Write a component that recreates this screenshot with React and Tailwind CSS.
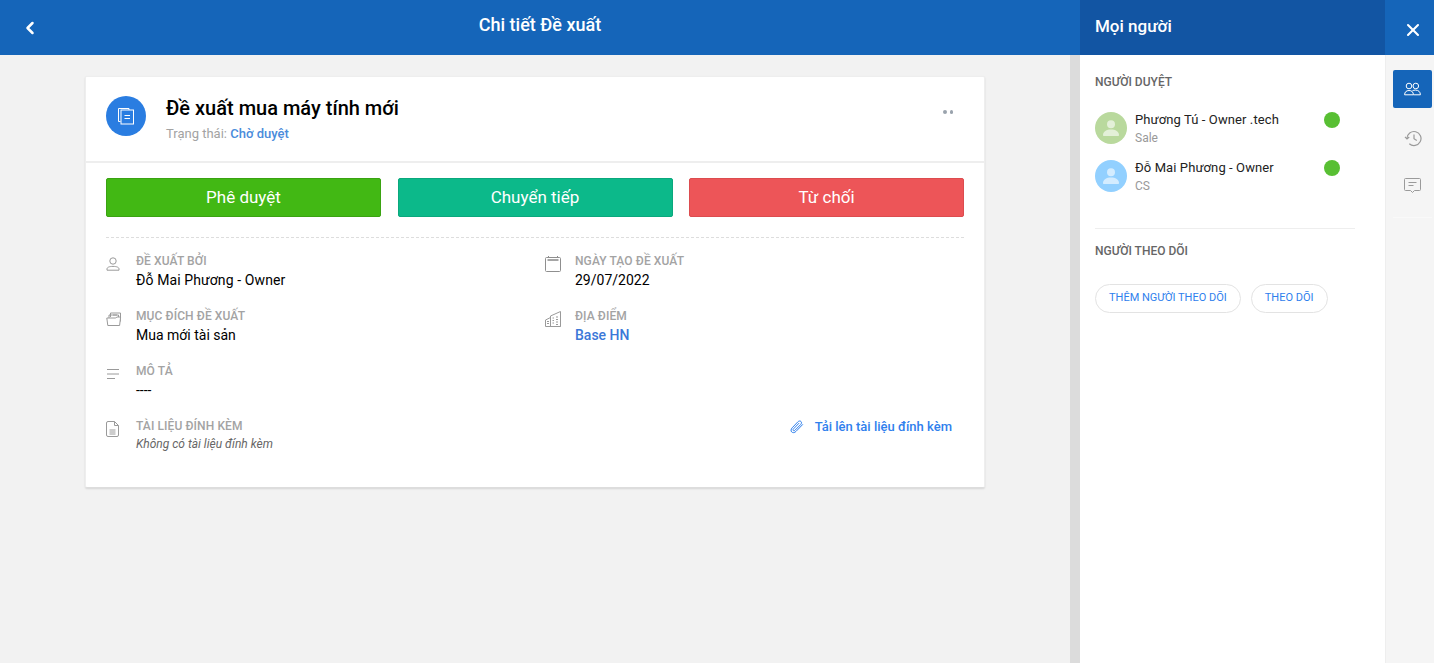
import React from 'react';
import { ChevronLeft, X } from 'lucide-react';

const IconUser = () => (
  <svg width="14" height="14" viewBox="0 0 14 14" fill="none" stroke="#9a9a9a" strokeWidth="1">
    <circle cx="7" cy="4" r="3.200" />
    <path d="M1 13.200v-1.200c0-1.600 2-2.600 6-2.600s6 1 6 2.600v1.200z" />
  </svg>
);

const IconFolder = () => (
  <svg width="16" height="14" viewBox="0 0 16 14" fill="none" stroke="#9a9a9a" strokeWidth="1">
    <path d="M4.500 5V1h10v8.500" />
    <path d="M3 6V3h9.500v2" />
    <path d="M.8 6h9l1-1h3.800l-1 8.500H1.800z" fill="#fff" />
    <path d="M7 3h4" />
  </svg>
);

const IconLines = () => (
  <svg width="14" height="10" viewBox="0 0 14 10" fill="none" stroke="#9a9a9a" strokeWidth="1">
    <path d="M1 .5h12M1 5h12M1 9.500h8" />
  </svg>
);

const IconFile = () => (
  <svg width="13" height="16" viewBox="0 0 13 16" fill="none" stroke="#9a9a9a" strokeWidth="1">
    <path d="M2 .5h6.500l4 4V14a1.500 1.500 0 0 1-1.500 1.500H2A1.500 1.500 0 0 1 .5 14V2A1.500 1.500 0 0 1 2 .5z" />
    <path d="M8.500.5v4h4" />
    <path d="M3.500 9h6M3.500 11h6M3.500 13h6" />
  </svg>
);

const IconCalendar = () => (
  <svg width="16" height="16" viewBox="0 0 16 16" fill="none" stroke="#8f8f8f" strokeWidth="1">
    <rect x=".5" y="1.500" width="15" height="14" rx="1" />
    <path d="M2.500 4h11" strokeWidth="1.600" />
    <path d="M3.500 0v1.500M12.500 0v1.500" />
  </svg>
);

const IconBuilding = () => (
  <svg width="16" height="16" viewBox="0 0 16 16" fill="none" stroke="#9a9a9a" strokeWidth="1">
    <path d="M.5 15.500V9l5-2.500v9M5.500 15.500V5l10-4.500v15z" />
    <path d="M.5 15.500h15" />
    <path d="M2 10.500h2M2 12.500h2M7.500 7h1.500M11 6h2M7.500 9.500h1.500M11 8.500h2M7.500 12h1.500M11 11h2M11 13.500h2" />
  </svg>
);

const IconClip = () => (
  <svg width="14" height="14" viewBox="0 0 14 14" fill="none" stroke="#2f80ed" strokeWidth="1" strokeLinecap="round">
    <path d="M12.600 4.600 6 11.400c-1.400 1.500-3.300 1.600-4.300.6-1-1-.9-2.800.5-4.200l5.600-5.900c1-1 2.400-1.200 3.200-.4.8.8.6 2.100-.4 3.100L5 10.200c-.6.6-1.300.7-1.700.3-.4-.4-.3-1.100.3-1.700l5.200-5.400" />
  </svg>
);

const IconDoc = () => (
  <svg width="18" height="20" viewBox="0 0 18 20" fill="none" stroke="#fff" strokeWidth="1">
    <path d="M3.500 15.500H1.500V2.500h10.500v1.500" />
    <rect x="4" y="4" width="12.500" height="14" fill="#2a7de1" />
    <path d="M7.500 9.500h5.500M7.500 12.500h5.500" />
  </svg>
);

const IconPeople = () => (
  <svg width="17" height="14" viewBox="0 0 17 14" fill="none" stroke="#fff" strokeWidth="1">
    <circle cx="5" cy="4" r="2.800" />
    <circle cx="11.800" cy="4" r="2.800" />
    <path d="M.6 12.800c0-2.600 1.600-4.300 4.400-4.300 2.800 0 4.400 1.700 4.400 4.300z" />
    <path d="M8.400 8.800c.9-.5 2-.7 3.100-.7 3 0 4.900 1.800 4.900 4.700h-6.800" />
  </svg>
);

const IconHistory = () => (
  <svg width="18" height="17" viewBox="0 0 18 17" fill="none" stroke="#9a9a9a" strokeWidth="1.200">
    <path d="M3 8.500a7 7 0 1 1 2.300 5.200" />
    <path d="M1 6.800 3 9l2.200-2" />
    <path d="M10 4.500v4.200l2.800 1.800" />
  </svg>
);

const IconComment = () => (
  <svg width="17" height="16" viewBox="0 0 17 16" fill="none" stroke="#9a9a9a" strokeWidth="1">
    <path d="M1.500.5h14a1 1 0 0 1 1 1v10a1 1 0 0 1-1 1h-5l-2 2-2-2h-5a1 1 0 0 1-1-1v-10a1 1 0 0 1 1-1z" />
    <path d="M4.500 4.500h8M4.500 7.500h5" />
  </svg>
);

const IconPerson = () => (
  <svg width="18" height="16" viewBox="0 0 18 16" fill="#ffffff" fillOpacity="0.6">
    <circle cx="9" cy="4.200" r="4" />
    <path d="M1 15c0-3.500 3.500-5.500 8-5.500s8 2 8 5.500c0 .6-.4 1-1 1H2c-.6 0-1-.4-1-1z" />
  </svg>
);

const Field = ({ icon, label, children }) => (
  <div className="flex h-[55px]">
    <div className="w-[30px] h-[17px] pt-[2px] flex items-center shrink-0">{icon}</div>
    <div>
      <div className="text-[12px] leading-[14px] font-medium tracking-[0.1px] text-[#a3a3a3]">{label}</div>
      {children}
    </div>
  </div>
);

const Approver = ({ name, role, color }) => (
  <div className="flex items-center h-[32px] mb-4">
    <div className={`w-8 h-8 rounded-full flex items-center justify-center shrink-0 ${color}`}>
      <IconPerson />
    </div>
    <div className="ml-2 w-[189px]">
      <div className="text-[13px] leading-[16px] mt-[1px] tracking-[0.1px] text-[#222]">{name}</div>
      <div className="text-[12px] leading-[14px] mt-[3px] text-[#999]">{role}</div>
    </div>
    <div className="w-4 h-4 rounded-full bg-[#58bf33] -mt-4"></div>
  </div>
);

export default function App() {
  return (
    <div className="h-[663px] flex flex-col overflow-hidden bg-[#f2f2f2] font-['Roboto',sans-serif]">
      <header className="h-[55px] flex shrink-0 bg-[#1565b9] text-white">
        <div className="w-[1080px] flex items-center relative">
          <ChevronLeft size={20} strokeWidth={3} className="ml-5" />
          <div className="absolute left-0 w-full text-center -mt-[7px] text-[18px] font-medium">Chi tiết Đề xuất</div>
        </div>
        <div className="w-[305px] bg-[#1255a3] pl-[15px] pt-[16px] text-[17px] leading-[20px] font-medium">Mọi người</div>
        <div className="w-[49px] flex items-center justify-center pt-[4px] pl-[6px]">
          <X size={20} strokeWidth={2.500} />
        </div>
      </header>

      <div className="flex flex-1">
        <main className="w-[1070px] pl-[85px] pt-[21px]">
          <div className="w-[900px] h-[412px] bg-white rounded-[2px] border border-[#eeeeee] border-b-[#dddddd] shadow-[0_1px_2px_rgba(0,0,0,0.12)]">
            <div className="h-[86px] border-b-2 border-[#eeeeee] pl-[20px] pt-[19px] flex relative">
              <div className="w-10 h-10 rounded-full bg-[#2a7de1] flex items-center justify-center">
                <IconDoc />
              </div>
              <div className="ml-5">
                <div className="text-[20px] leading-[24px] font-medium text-black">Đề xuất mua máy tính mới</div>
                <div className="text-[13px] leading-[15px] mt-[6px] text-[#a3a3a3]">
                  Trạng thái: <span className="font-medium text-[#4a8cdb]">Chờ duyệt</span>
                </div>
              </div>
              <div className="absolute left-[857px] top-[33px] flex gap-[3px]">
                <div className="w-[3.500px] h-[3.500px] rounded-full bg-[#9aa3ad]"></div>
                <div className="w-[3.500px] h-[3.500px] rounded-full bg-[#9aa3ad]"></div>
              </div>
            </div>

            <div className="px-[20px] pt-[15px]">
              <div className="flex justify-between">
                <button className="w-[275px] h-[39px] rounded-[2px] bg-[#42b814] border border-[#3aa312] text-white text-[17px]">Phê duyệt</button>
                <button className="w-[275px] h-[39px] rounded-[2px] bg-[#0cb98a] border border-[#0aa87d] text-white text-[17px]">Chuyển tiếp</button>
                <button className="w-[275px] h-[39px] rounded-[2px] bg-[#ed5558] border border-[#dc4c4f] text-white text-[17px]">Từ chối</button>
              </div>

              <div className="mt-[20px] border-t border-dashed border-[#dddddd]"></div>

              <div className="mt-[16px] flex">
                <div className="w-[439px]">
                  <Field icon={<IconUser />} label="ĐỀ XUẤT BỞI">
                    <div className="text-[14px] leading-[16px] mt-[4px] tracking-[0.1px] text-black">Đỗ Mai Phương - Owner</div>
                  </Field>
                  <Field icon={<IconFolder />} label="MỤC ĐÍCH ĐỀ XUẤT">
                    <div className="text-[14px] leading-[16px] mt-[4px] text-black">Mua mới tài sản</div>
                  </Field>
                  <Field icon={<IconLines />} label="MÔ TẢ">
                    <div className="text-[14px] leading-[16px] mt-[4px] text-black">----</div>
                  </Field>
                </div>
                <div>
                  <Field icon={<IconCalendar />} label="NGÀY TẠO ĐỀ XUẤT">
                    <div className="text-[14px] leading-[16px] mt-[4px] text-black">29/07/2022</div>
                  </Field>
                  <Field icon={<IconBuilding />} label="ĐỊA ĐIỂM">
                    <div className="text-[14px] leading-[16px] mt-[4px] font-medium text-[#3b78d8]">Base HN</div>
                  </Field>
                </div>
              </div>

              <div className="flex justify-between">
                <Field icon={<IconFile />} label="TÀI LIỆU ĐÍNH KÈM">
                  <div className="text-[12px] leading-[14px] mt-[4px] italic text-[#666]">Không có tài liệu đính kèm</div>
                </Field>
                <div className="flex items-center h-[16px] pr-3 gap-[11px]">
                  <IconClip />
                  <span className="text-[13px] font-medium text-[#2f80ed]">Tải lên tài liệu đính kèm</span>
                </div>
              </div>
            </div>
          </div>
        </main>

        <div className="w-[10px] bg-[#dcdcdc]"></div>

        <aside className="w-[305px] bg-white pl-[15px] pt-[20px]">
          <div className="text-[12px] leading-[14px] font-medium text-[#666]">NGƯỜI DUYỆT</div>
          <div className="mt-[23px]">
            <Approver name="Phương Tú - Owner .tech" role="Sale" color="bg-[#b9d99d]" />
            <Approver name="Đỗ Mai Phương - Owner" role="CS" color="bg-[#92d0ff]" />
          </div>
          <div className="mt-[36px] w-[260px] border-t border-[#eeeeee]"></div>
          <div className="mt-[15px] text-[12px] leading-[14px] font-medium text-[#666]">NGƯỜI THEO DÕI</div>
          <div className="mt-[26px] flex gap-[10px]">
            <button className="h-[29px] px-[13px] rounded-full border border-[#e3e3e3] text-[11px] text-[#2f80ed]">THÊM NGƯỜI THEO DÕI</button>
            <button className="h-[29px] px-[13px] rounded-full border border-[#e3e3e3] text-[11px] text-[#2f80ed]">THEO DÕI</button>
          </div>
        </aside>

        <nav className="w-[49px] bg-[#f5f5f5] border-l border-[#eeeeee] pt-[15px] pl-[7px]">
          <div className="w-[39px] h-[38px] rounded-[2px] bg-[#1565b9] flex items-center justify-center">
            <IconPeople />
          </div>
          <div className="w-[39px] h-[30px] mt-[15px] flex items-center justify-center">
            <IconHistory />
          </div>
          <div className="w-[39px] h-[30px] mt-[18px] flex items-center justify-center">
            <IconComment />
          </div>
          <div className="w-[39px] mt-[16px] border-t border-[#f9f9f9]"></div>
        </nav>
      </div>
    </div>
  );
}
